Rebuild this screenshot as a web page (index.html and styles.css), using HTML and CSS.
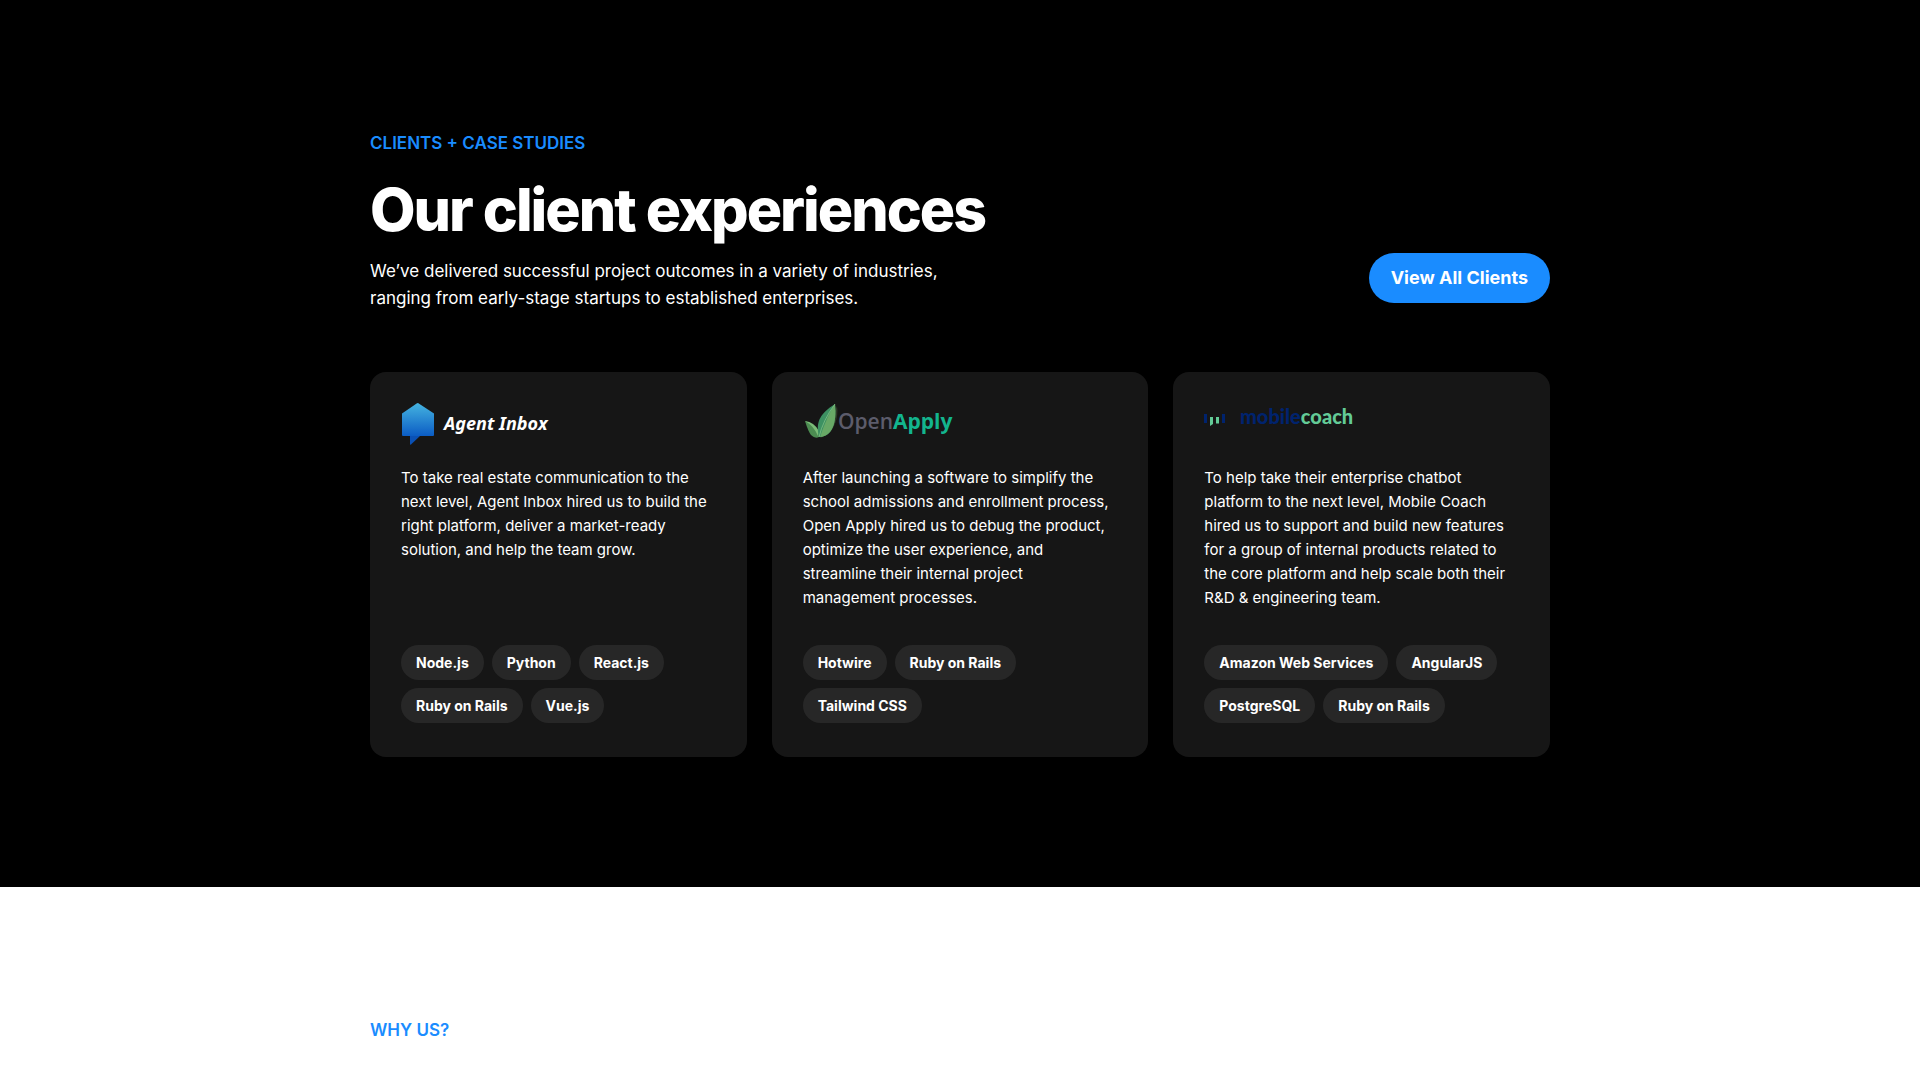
FILE: index.html
```html
<!DOCTYPE html>
<html lang="en">
<head>
<meta charset="utf-8">
<meta name="viewport" content="width=device-width, initial-scale=1">
<title>Our client experiences</title>
<link rel="stylesheet" href="styles.css">
</head>
<body>
<main>
  <section class="section section-dark">
    <div class="container">
      <header class="intro">
        <div class="intro-copy">
          <p class="eyebrow">CLIENTS + CASE STUDIES</p>
          <h2 class="title">Our client experiences</h2>
          <p class="lead">We’ve delivered successful project outcomes in a variety of industries, ranging from early-stage startups to established enterprises.</p>
        </div>
        <a class="button" href="#clients">View All Clients</a>
      </header>

      <div class="cards" id="clients">
        <article class="card">
          <svg class="logo" width="150" height="43" viewBox="0 0 150 43" role="img" aria-label="Agent Inbox">
            <defs>
              <linearGradient id="house" x1="0" y1="0" x2="0" y2="1">
                <stop offset="0" stop-color="#45b4e0"/>
                <stop offset="1" stop-color="#0b5cc4"/>
              </linearGradient>
            </defs>
            <path d="M17 0L33 10.500V32Q33 33 32 33H2Q1 33 1 32V10.500L16 .300Q16.500 0 17 0Z" fill="url(#house)"/>
            <path d="M9 33H19L10 41.500Q9 42.300 9 41Z" fill="#0a51b5"/>
            <text class="logo-agent" x="43" y="27">Agent Inbox</text>
          </svg>
          <p class="card-text">To take real estate communication to the next level, Agent Inbox hired us to build the right platform, deliver a market-ready solution, and help the team grow.</p>
          <ul class="tags">
            <li class="tag">Node.js</li>
            <li class="tag">Python</li>
            <li class="tag">React.js</li>
            <li class="tag">Ruby on Rails</li>
            <li class="tag">Vue.js</li>
          </ul>
        </article>

        <article class="card">
          <svg class="logo" width="150" height="43" viewBox="0 0 150 43" role="img" aria-label="OpenApply">
            <path d="M34 3C36 14 31 27 24 32L17 35Q28 20 34 3Z" fill="#2f3a28"/>
            <path d="M2 18Q11 20 16 29V34Q12 36 8 32Q5 28 2 18Z" fill="#4c8c51"/>
            <path d="M2 18Q11 19 16 28L15 33Q11 23 2 18Z" fill="#7bbd78"/>
            <path d="M32 1C18 10 12 18 16 34C29 34 34 20 32 1Z" fill="#3d9162"/>
            <path d="M32 1Q24 13 17 34C29 33 34 20 32 1Z" fill="#68a866"/>
            <path d="M16 34Q20 17 32 1" fill="none" stroke="#8bc68a" stroke-width=".7"/>
            <text class="logo-open" x="35" y="26">Open<tspan class="logo-apply">Apply</tspan></text>
          </svg>
          <p class="card-text">After launching a software to simplify the school admissions and enrollment process, Open Apply hired us to debug the product, optimize the user experience, and streamline their internal project management processes.</p>
          <ul class="tags">
            <li class="tag">Hotwire</li>
            <li class="tag">Ruby on Rails</li>
            <li class="tag">Tailwind CSS</li>
          </ul>
        </article>

        <article class="card">
          <svg class="logo" width="155" height="43" viewBox="0 0 155 43" role="img" aria-label="mobilecoach">
            <path d="M0 11H3V20H0ZM18 11H21V20H18Z" fill="#00236e"/>
            <path d="M6 14H9V21L6 23ZM12 14H15V20.500H12Z" fill="#63cb97"/>
            <text class="logo-mobile" x="36" y="21">mobile<tspan class="logo-coach">coach</tspan></text>
          </svg>
          <p class="card-text">To help take their enterprise chatbot platform to the next level, Mobile Coach hired us to support and build new features for a group of internal products related to the core platform and help scale both their R&amp;D &amp; engineering team.</p>
          <ul class="tags">
            <li class="tag">Amazon Web Services</li>
            <li class="tag">AngularJS</li>
            <li class="tag">PostgreSQL</li>
            <li class="tag">Ruby on Rails</li>
          </ul>
        </article>
      </div>
    </div>
  </section>

  <section class="section section-light">
    <div class="container">
      <p class="eyebrow">WHY US?</p>
    </div>
  </section>
</main>
</body>
</html>
```
FILE: styles.css
```css
* {
  box-sizing: border-box;
}

html,
body,
h2,
p,
ul {
  margin: 0;
  padding: 0;
}

body {
  background: #fff;
  color: #fff;
  font-family: Inter, "Liberation Sans", sans-serif;
  font-size: 15px;
  line-height: 24px;
}

.section {
  padding: 130px 24px;
}

.section-dark {
  background: #000;
}

.section-light {
  padding-bottom: 24px;
  background: #fff;
}

.container {
  max-width: 1180px;
  margin: 0 auto;
}

.intro {
  display: flex;
  align-items: flex-end;
  justify-content: space-between;
  gap: 24px;
  margin-bottom: 60px;
}

.eyebrow {
  color: #1a8cff;
  font-size: 17px;
  font-weight: 600;
  line-height: 27px;
}

.title {
  margin: 17px 0 12px;
  font-size: 59px;
  font-weight: 800;
  line-height: 72px;
  letter-spacing: -2px;
}

.lead {
  max-width: 600px;
  font-size: 17px;
  line-height: 27px;
}

.button {
  flex: none;
  margin-bottom: 9px;
  padding: 11px 22px 12px;
  border-radius: 25px;
  background: #1a8cff;
  color: #fff;
  font-size: 18px;
  font-weight: 700;
  line-height: 27px;
  text-decoration: none;
}

.cards {
  display: grid;
  grid-template-columns: repeat(auto-fit, minmax(320px, 1fr));
  gap: 25px;
}

.card {
  display: flex;
  flex-direction: column;
  padding: 31px 31px 34px;
  border-radius: 16px;
  background: #161616;
}

.logo {
  display: block;
  margin-bottom: 20px;
}

.card-text {
  margin-bottom: 35px;
}

.tags {
  display: flex;
  flex-wrap: wrap;
  gap: 8px;
  margin-top: auto;
  list-style: none;
}

.tag {
  padding: 7px 15px;
  border-radius: 18px;
  background: #272727;
  font-size: 14px;
  font-weight: 700;
  line-height: 21px;
}

.logo-agent {
  fill: #fff;
  font: italic 700 18px "Noto Sans", sans-serif;
}

.logo-open {
  fill: #5c5c6b;
  font: 600 21px "Open Sans", sans-serif;
}

.logo-apply {
  fill: #13b58e;
  font-weight: 700;
}

.logo-mobile {
  fill: #00236e;
  font: 900 20px Lato, sans-serif;
}

.logo-coach {
  fill: #63cb97;
}
```
